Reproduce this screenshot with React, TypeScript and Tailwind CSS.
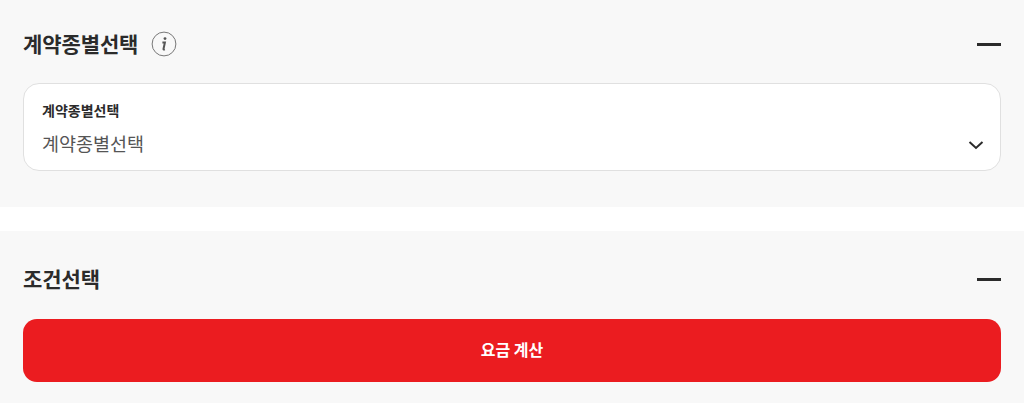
const font = { fontFamily: '"Noto Sans CJK KR", "Noto Sans", sans-serif' };

function Minus() {
  return <span className="block h-[3px] w-6 bg-[#2b2b2b]" />;
}

function Header({ title, info }: { title: string; info?: boolean }) {
  return (
    <div className="flex h-[24px] items-center justify-between">
      <div className="flex items-center">
        <h2 className="pb-[3px] text-[21px] font-bold leading-[24px] tracking-[-0.1px] text-[#2b2b2b]">{title}</h2>
        {info && (
          <svg className="ml-[13px]" width="26" height="26" viewBox="0 0 26 26" fill="none">
            <circle cx="13" cy="13" r="11.9" stroke="#777" strokeWidth="1" />
            <path d="M11.4 11.4h2.5l-1.4 6.6c-.1.5.3.6 1.3.2" stroke="#555" strokeWidth="2" fill="none" />
            <circle cx="14" cy="7.6" r="1.4" fill="#555" />
          </svg>
        )}
      </div>
      <Minus />
    </div>
  );
}

export default function App() {
  return (
    <div style={font} className="h-[403px] w-[1024px] overflow-hidden bg-white">
      <section className="h-[207px] bg-[#f8f8f8] px-[23px] pt-[32px]">
        <Header title="계약종별선택" info />
        <div className="relative mt-[27px] h-[88px] w-[978px] rounded-[16px] border border-[#e0e0e0] bg-white pl-[18px] pt-[17px]">
          <div className="text-[14px] font-bold leading-[18px] text-[#2b2b2b]">계약종별선택</div>
          <div className="mt-[12px] text-[18.5px] leading-[24px] text-[#555]">계약종별선택</div>
          <svg className="absolute right-[16px] top-[55px]" width="16" height="12" viewBox="0 0 16 12" fill="none">
            <path d="M1.5 3l6.5 6 6.5-6" stroke="#2b2b2b" strokeWidth="2" />
          </svg>
        </div>
      </section>
      <section className="mt-[24px] h-[172px] bg-[#f8f8f8] px-[23px] pt-[36px]">
        <Header title="조건선택" />
        <button className="mt-[28px] flex h-[63px] w-[978px] items-center justify-center rounded-[14px] bg-[#eb1c20] pb-[3px] text-[16px] font-bold text-white">
          요금 계산
        </button>
      </section>
    </div>
  );
}
